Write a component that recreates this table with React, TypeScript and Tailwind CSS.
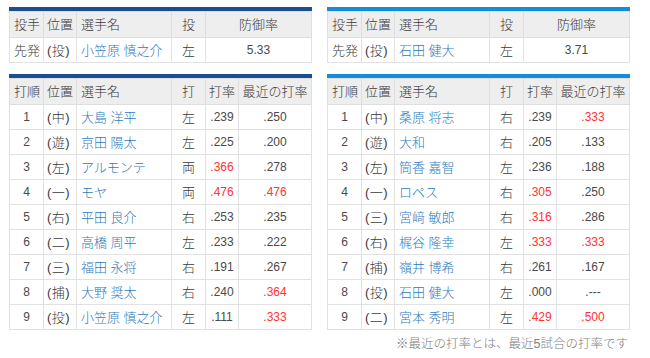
type Batter = { no: number; pos: string; name: string; hand: string; avg: string; recent: string; avgHot?: boolean; recentHot?: boolean };

const leftBatters: Batter[] = [
  { no: 1, pos: "中", name: "大島 洋平", hand: "左", avg: ".239", recent: ".250" },
  { no: 2, pos: "遊", name: "京田 陽太", hand: "左", avg: ".225", recent: ".200" },
  { no: 3, pos: "左", name: "アルモンテ", hand: "両", avg: ".366", recent: ".278", avgHot: true },
  { no: 4, pos: "一", name: "モヤ", hand: "両", avg: ".476", recent: ".476", avgHot: true, recentHot: true },
  { no: 5, pos: "右", name: "平田 良介", hand: "右", avg: ".253", recent: ".235" },
  { no: 6, pos: "二", name: "高橋 周平", hand: "左", avg: ".233", recent: ".222" },
  { no: 7, pos: "三", name: "福田 永将", hand: "右", avg: ".191", recent: ".267" },
  { no: 8, pos: "捕", name: "大野 奨太", hand: "右", avg: ".240", recent: ".364", recentHot: true },
  { no: 9, pos: "投", name: "小笠原 慎之介", hand: "左", avg: ".111", recent: ".333", recentHot: true },
];

const rightBatters: Batter[] = [
  { no: 1, pos: "中", name: "桑原 将志", hand: "右", avg: ".239", recent: ".333", recentHot: true },
  { no: 2, pos: "遊", name: "大和", hand: "右", avg: ".205", recent: ".133" },
  { no: 3, pos: "左", name: "筒香 嘉智", hand: "左", avg: ".236", recent: ".188" },
  { no: 4, pos: "一", name: "ロペス", hand: "右", avg: ".305", recent: ".250", avgHot: true },
  { no: 5, pos: "三", name: "宮﨑 敏郎", hand: "右", avg: ".316", recent: ".286", avgHot: true },
  { no: 6, pos: "右", name: "梶谷 隆幸", hand: "左", avg: ".333", recent: ".333", avgHot: true, recentHot: true },
  { no: 7, pos: "捕", name: "嶺井 博希", hand: "右", avg: ".261", recent: ".167" },
  { no: 8, pos: "投", name: "石田 健大", hand: "左", avg: ".000", recent: ".---" },
  { no: 9, pos: "二", name: "宮本 秀明", hand: "左", avg: ".429", recent: ".500", avgHot: true, recentHot: true },
];

const th = "border border-[#dedede] bg-[#eeeeee] font-light h-[26px] p-0";
const td = "border border-[#e2e2e2] bg-white h-[25px] p-0";
const num = "text-center text-[12px] text-[#4a4a4a]";

function Bar({ color }: { color: string }) {
  return <div className={`h-[4px] ${color}`} />;
}

function PitcherTable({ bar, name, era }: { bar: string; name: string; era: string }) {
  return (
    <div>
      <Bar color={bar} />
      <table className="w-full table-fixed border-collapse">
        <colgroup>
          <col className="w-[34px]" />
          <col className="w-[33px]" />
          <col className="w-[95px]" />
          <col className="w-[34px]" />
          <col />
        </colgroup>
        <thead>
          <tr>
            <th className={`${th} text-left pl-[4px]`}>投手</th>
            <th className={`${th} text-left pl-[3px]`}>位置</th>
            <th className={`${th} text-left pl-[4px]`}>選手名</th>
            <th className={`${th} text-center`}>投</th>
            <th className={`${th} text-center`}>防御率</th>
          </tr>
        </thead>
        <tbody>
          <tr>
            <td className={`${td} pl-[4px]`}>先発</td>
            <td className={`${td} pl-[3px] tracking-[0.5px]`}>(投)</td>
            <td className={`${td} pl-[4px] text-[#2c7bbd]`}>{name}</td>
            <td className={`${td} text-center`}>左</td>
            <td className={`${td} ${num}`}>{era}</td>
          </tr>
        </tbody>
      </table>
    </div>
  );
}

function LineupTable({ bar, rows }: { bar: string; rows: Batter[] }) {
  return (
    <div>
      <Bar color={bar} />
      <table className="w-full table-fixed border-collapse">
        <colgroup>
          <col className="w-[34px]" />
          <col className="w-[33px]" />
          <col className="w-[95px]" />
          <col className="w-[34px]" />
          <col className="w-[33px]" />
          <col />
        </colgroup>
        <thead>
          <tr>
            <th className={`${th} text-left pl-[4px]`}>打順</th>
            <th className={`${th} text-left pl-[3px]`}>位置</th>
            <th className={`${th} text-left pl-[4px]`}>選手名</th>
            <th className={`${th} text-center`}>打</th>
            <th className={`${th} text-center`}>打率</th>
            <th className={`${th} text-center`}>最近の打率</th>
          </tr>
        </thead>
        <tbody>
          {rows.map((r) => (
            <tr key={r.no}>
              <td className={`${td} ${num}`}>{r.no}</td>
              <td className={`${td} pl-[3px] tracking-[0.5px]`}>({r.pos})</td>
              <td className={`${td} pl-[4px] text-[#2c7bbd]`}>{r.name}</td>
              <td className={`${td} text-center`}>{r.hand}</td>
              <td className={`${td} ${num} ${r.avgHot ? "text-[#ff3333]" : ""}`}>{r.avg}</td>
              <td className={`${td} ${num} ${r.recentHot ? "text-[#ff3333]" : ""}`}>{r.recent}</td>
            </tr>
          ))}
        </tbody>
      </table>
    </div>
  );
}

export default function App() {
  return (
    <div className="w-[650px] h-[358px] bg-white pl-[9px] pt-[7px] text-[13px] leading-none font-light text-[#3a3a3a] font-['Liberation_Sans','Noto_Sans_CJK_JP',sans-serif]">
      <div className="flex gap-[15px]">
        <div className="w-[303px] flex flex-col gap-[11px]">
          <PitcherTable bar="bg-[#1b4e8f]" name="小笠原 慎之介" era="5.33" />
          <LineupTable bar="bg-[#1b4e8f]" rows={leftBatters} />
        </div>
        <div className="w-[303px] flex flex-col gap-[11px]">
          <PitcherTable bar="bg-[#168bd8]" name="石田 健大" era="3.71" />
          <LineupTable bar="bg-[#168bd8]" rows={rightBatters} />
          <p className="-mt-[3px] text-right pr-[2px] text-[12.5px] text-[#808080]">※最近の打率とは、最近5試合の打率です</p>
        </div>
      </div>
    </div>
  );
}
